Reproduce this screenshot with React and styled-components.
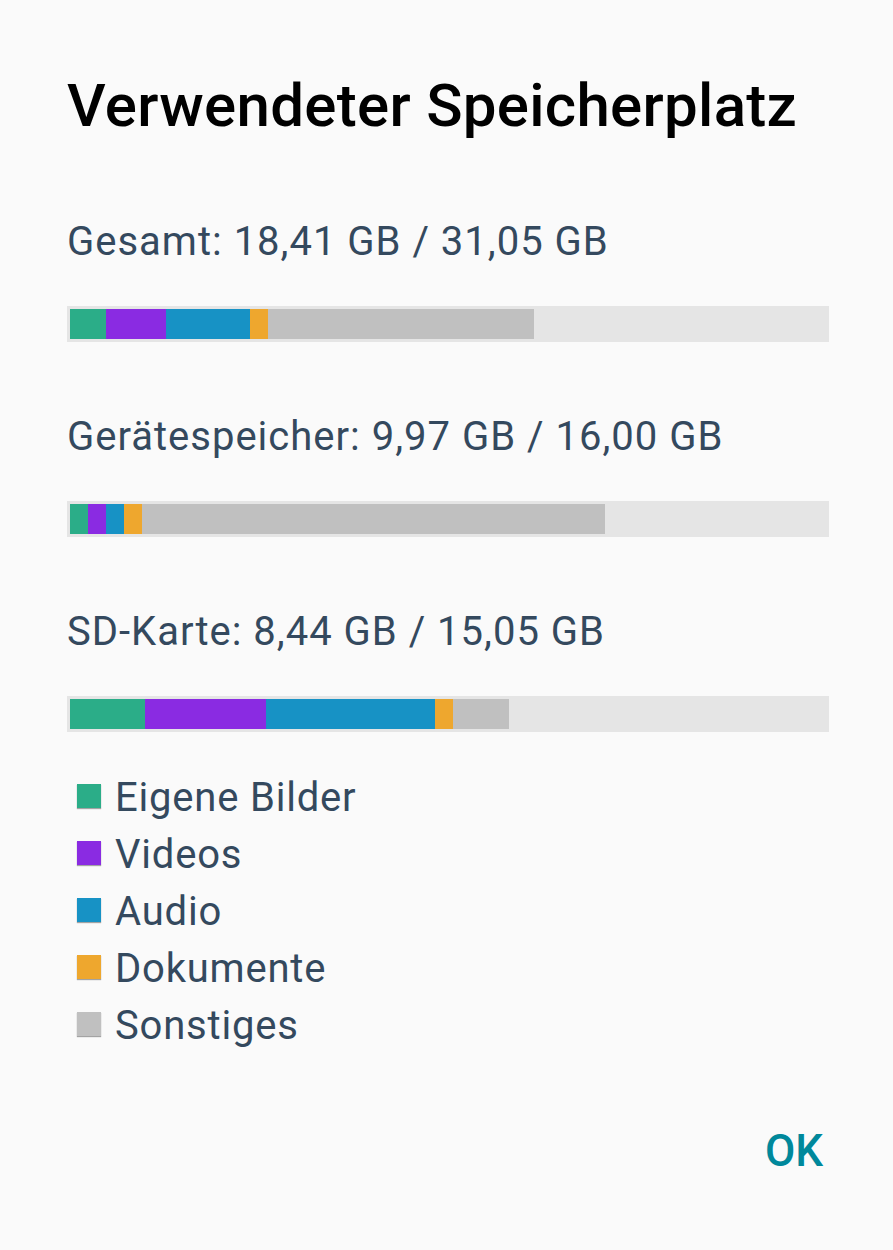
import React from 'react'
import styled, { createGlobalStyle } from 'styled-components'

const GlobalStyle = createGlobalStyle`
   html, body {
      margin: 0;
      padding: 0;
      background: #fafafa;
   }
   body {
      font-family: Roboto, 'Noto Sans', 'Liberation Sans', sans-serif;
   }
`

const COLORS = {
   images: '#2bad88',
   videos: '#8a2be2',
   audio: '#1792c5',
   docs: '#eea72e',
   other: '#c0c0c0',
}

// pixel widths measured on a 756px inner track
const TRACK = 756

const storages = [
   {
      label: 'Gesamt: 18,41 GB / 31,05 GB',
      parts: [36, 60, 84, 18, 266],
   },
   {
      label: 'Gerätespeicher: 9,97 GB / 16,00 GB',
      parts: [18, 18, 18, 18, 463],
   },
   {
      label: 'SD-Karte: 8,44 GB / 15,05 GB',
      parts: [75, 121, 169, 18, 56],
   },
]

const legend = [
   { key: 'images', text: 'Eigene Bilder' },
   { key: 'videos', text: 'Videos' },
   { key: 'audio', text: 'Audio' },
   { key: 'docs', text: 'Dokumente' },
   { key: 'other', text: 'Sonstiges' },
]

const order = ['images', 'videos', 'audio', 'docs', 'other']

export default function App() {
   return (
      <>
         <GlobalStyle />
         <Styles.Dialog>
            <Styles.Title>Verwendeter Speicherplatz</Styles.Title>
            {storages.map(s => (
               <Styles.Section key={s.label}>
                  <Styles.Label>{s.label}</Styles.Label>
                  <Styles.Track>
                     {s.parts.map((w, i) => (
                        <Styles.Segment
                           key={order[i]}
                           color={COLORS[order[i]]}
                           style={{ width: `${(w / TRACK) * 100}%` }}
                        />
                     ))}
                  </Styles.Track>
               </Styles.Section>
            ))}
            <Styles.Legend>
               {legend.map(item => (
                  <Styles.LegendRow key={item.key}>
                     <Styles.Swatch color={COLORS[item.key]} />
                     {item.text}
                  </Styles.LegendRow>
               ))}
            </Styles.Legend>
            <Styles.Actions>
               <Styles.Button>OK</Styles.Button>
            </Styles.Actions>
         </Styles.Dialog>
      </>
   )
}

const Styles = {
   Dialog: styled.div`
      min-height: 1250px;
      box-sizing: border-box;
      padding: 70px 64px 0 67px;
      display: flex;
      flex-direction: column;
   `,
   Title: styled.h1`
      margin: 0 0 76px;
      font-size: 60px;
      line-height: 72px;
      font-weight: 500;
      letter-spacing: 0.3px;
      color: #000;
      white-space: nowrap;
   `,
   Section: styled.div`
      display: flex;
      flex-direction: column;
      & + & {
         margin-top: 71px;
      }
   `,
   Label: styled.div`
      font-size: 40px;
      line-height: 48px;
      letter-spacing: 1px;
      color: #34495e;
      margin-bottom: 40px;
   `,
   Track: styled.div`
      height: 36px;
      box-sizing: border-box;
      padding: 3px;
      background: #e5e5e5;
      display: flex;
   `,
   Segment: styled.div`
      height: 100%;
      background: ${({ color }) => color};
      flex: none;
   `,
   Legend: styled.ul`
      list-style: none;
      margin: 37px 0 0;
      padding: 0;
   `,
   LegendRow: styled.li`
      display: flex;
      align-items: center;
      gap: 14px;
      font-size: 40px;
      line-height: 57px;
      letter-spacing: 0.8px;
      color: #34495e;
      padding-left: 10px;
   `,
   Swatch: styled.span`
      width: 24px;
      height: 24px;
      flex: none;
      margin-top: -3px;
      background: ${({ color }) => color};
      box-shadow: 0 1px 1px rgba(0, 0, 0, 0.35);
   `,
   Actions: styled.div`
      display: flex;
      justify-content: flex-end;
      margin-top: 71px;
   `,
   Button: styled.button`
      border: none;
      background: none;
      padding: 0;
      margin-right: 6px;
      font-family: inherit;
      font-size: 44px;
      line-height: 52px;
      font-weight: 500;
      color: #00889b;
      cursor: pointer;
   `,
}
